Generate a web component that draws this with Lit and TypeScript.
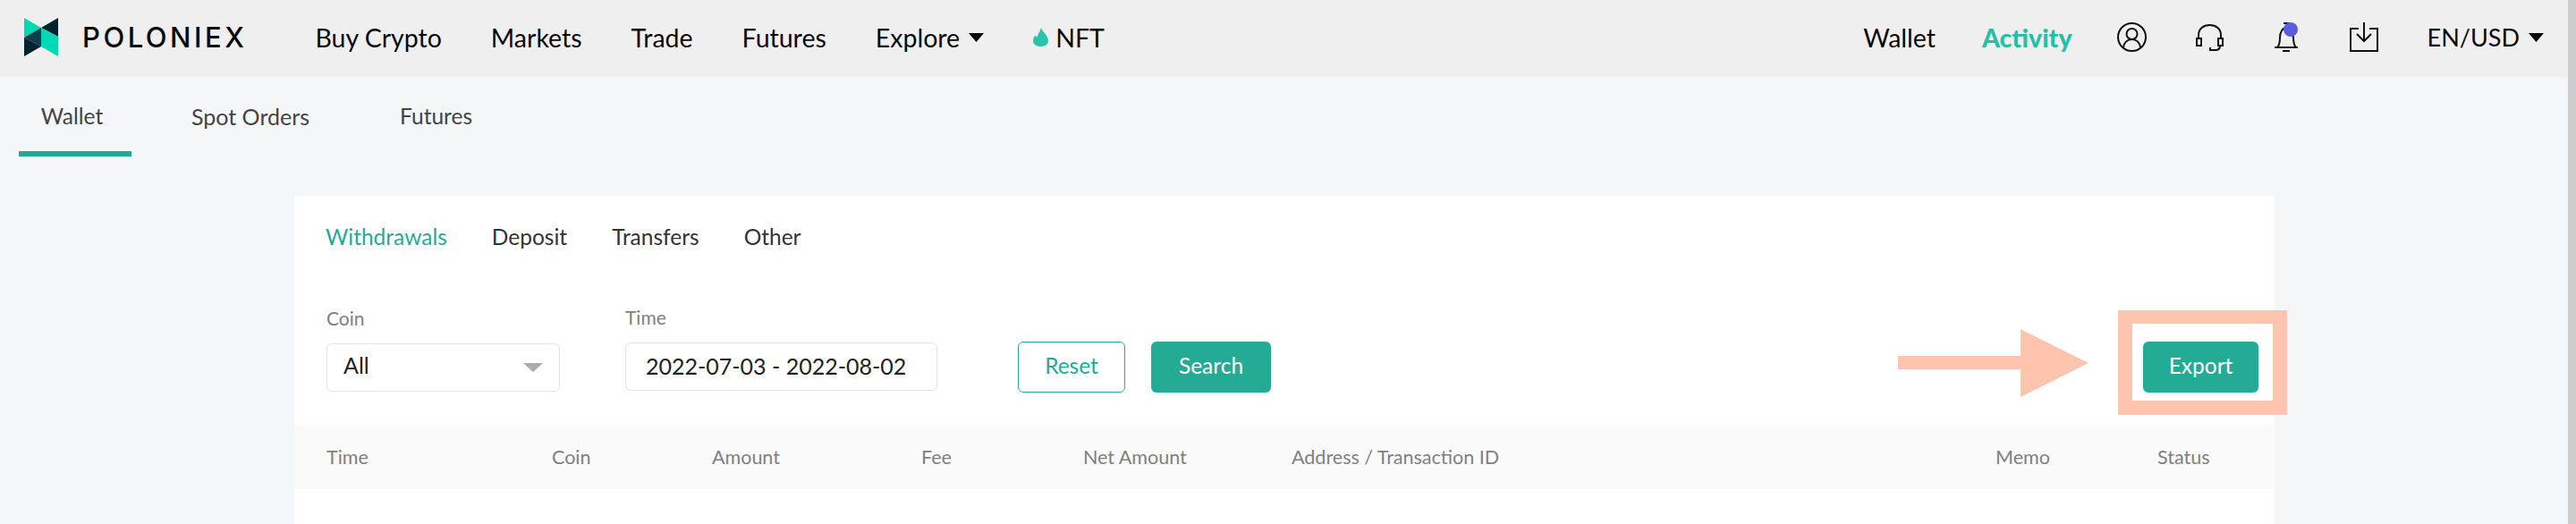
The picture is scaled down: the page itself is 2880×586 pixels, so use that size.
import { LitElement, html, css } from "lit";
import { customElement } from "lit/decorators.js";

@customElement("app-root")
export class AppRoot extends LitElement {
  static styles = css`
    :host { display: block; position: relative; width: 2880px; height: 586px; overflow: hidden; font-family: "Lato", "Liberation Sans", sans-serif; background: #f5f6f8; color: #111; }
    .page { display: flex; height: 586px; }
    .main { flex: 1; min-width: 0; display: flex; flex-direction: column; }
    .scrollbar { width: 9px; background: #cdcdcd; }
    .top { height: 86px; box-sizing: border-box; background: #efefef; display: flex; align-items: center; padding: 0 27px 3px; font-size: 28.500px; color: #0a0a0a; flex: none; }
    .logo { display: block; flex: none; }
    .brand { font-family: "Inter", "Liberation Sans", sans-serif; font-weight: 500; font-size: 31px; letter-spacing: 3.5px; margin-left: 27px; margin-right: 76px; color: #0a0a0a; line-height: 1; }
    .nav { display: flex; align-items: center; gap: 55px; }
    .nav span { display: flex; align-items: center; }
    .right { margin-left: auto; display: flex; align-items: center; gap: 55px; }
    .wallet { margin-right: -3px; }
    .activity { color: #26bfa5; font-weight: 900; font-size: 28.500px; margin-right: -5px; }
    .caret { display: block; margin-left: 10px; }
    .flame { display: block; margin-right: 8px; }
    .icon { display: block; flex: none; }
    .locale { display: flex; align-items: center; font-size: 27px; }
    .tabs { display: flex; height: 89px; padding-left: 21px; flex: none; font-size: 24.500px; color: #444; }
    .tab { width: 126px; box-sizing: border-box; display: flex; justify-content: center; padding-top: 26px; height: 89px; border-bottom: 6px solid transparent; line-height: 36px; }
    .tab.on { border-bottom-color: #24ab96; padding-right: 7px; }
    .tab.spot { width: auto; margin-left: 67px; font-size: 25px; }
    .tab.fut { width: auto; margin-left: 101px; }
    .card { margin: 44px 0 0 329px; width: 2214px; flex: 1; background: #fff; box-sizing: border-box; padding-top: 30px; }
    .sub { display: flex; gap: 50px; padding-left: 35px; font-size: 24.500px; line-height: 32px; color: #333; }
    .sub .on { color: #24ab96; }
    .filters { display: flex; align-items: flex-end; margin-top: 63px; padding: 0 18px 0 36px; height: 95px; }
    .field { display: flex; flex-direction: column; }
    .field label { font-size: 21px; line-height: 30px; color: #808080; margin-bottom: 13px; }
    .box { height: 54px; box-sizing: border-box; border: 1px solid #e4e4e4; border-radius: 6px; display: flex; align-items: center; font-size: 25px; color: #222; margin-bottom: 1px; }
    .coin { width: 261px; padding: 0 18px; justify-content: space-between; }
    .coin-value { padding-bottom: 6px; }
    .date { width: 349px; padding: 0 22px 2px; margin-bottom: 2px; }
    .time { margin-left: 73px; }
    .btn { height: 57px; box-sizing: border-box; border-radius: 6px; display: flex; align-items: center; justify-content: center; font-size: 24.500px; flex: none; padding-bottom: 4px; }
    .reset { width: 120px; margin-left: 90px; border: 1px solid #24ab96; color: #24ab96; }
    .solid { background: #24ab96; color: #fff; box-shadow: 0 2px 4px rgba(0, 0, 0, 0.08); }
    .search { width: 134px; margin-left: 29px; }
    .export { width: 129px; margin-left: auto; }
    .thead { display: grid; grid-template-columns: 252px 179px 234px 181px 233px 787px 181px 1fr; margin-top: 36px; height: 72px; padding-left: 36px; align-items: center; background: #fafafa; color: #808080; font-size: 21.500px; }
    .mark { position: absolute; left: 2368px; top: 347px; width: 189px; height: 117px; box-sizing: border-box; border: solid #ffc4ad; border-width: 15px 16px 16px; }
    .arrow { position: absolute; left: 2122px; top: 368px; display: block; }
  `;

  caret() {
    return html`<svg class="caret" width="17" height="10" viewBox="0 0 17 10"><path d="M0 0h17L8.500 10z" fill="#0a0a0a"/></svg>`;
  }

  render() {
    return html`
      <div class="page">
        <div class="main">
          <header class="top">
            <svg class="logo" width="38" height="43" viewBox="27 20 38 43">
              <path d="M27 20l19 11-19 11z" fill="#00d8b4"/>
              <path d="M65 20L46 31l19 10z" fill="#03242f"/>
              <path d="M46 31L27 42l19 10z" fill="#0f3d50"/>
              <path d="M46 31l19 10v22l-19-11z" fill="#00d8b4"/>
              <path d="M27 42l19 10-19 11z" fill="#03242f"/>
            </svg>
            <div class="brand">POLONIEX</div>
            <nav class="nav">
              <span>Buy Crypto</span><span>Markets</span><span>Trade</span><span>Futures</span>
              <span>Explore${this.caret()}</span>
              <span>
                <svg class="flame" width="17" height="21" viewBox="0 0 17 21"><path d="M9 0c.5 3 3 4.500 5 7.500 2 3 3 5 3 7.500 0 3.500-3.500 6-8.500 6S0 18.500 0 14.500c0-2.500 1-4 2.500-6 .5 1 1.500 1.500 2.500 2C5 7 8 4 9 0z" fill="#2bc4aa"/></svg>NFT
              </span>
            </nav>
            <div class="right">
              <span class="wallet">Wallet</span>
              <span class="activity">Activity</span>
              <svg class="icon" width="33" height="33" viewBox="0 0 33 33" fill="none" stroke="#111" stroke-width="2">
                <circle cx="16.500" cy="16.500" r="15.500"/><circle cx="16.500" cy="13" r="6"/>
                <path d="M7 28c.5-5 4-9 9.500-9s9 4 9.500 9"/>
              </svg>
              <svg class="icon" width="31" height="30" viewBox="0 0 31 30" fill="none" stroke="#111" stroke-width="2">
                <path d="M3 16V12C3 5.500 8.500 1 15.500 1S28 5.500 28 12v4"/>
                <rect x="1" y="16" width="5" height="8"/><rect x="25" y="16" width="5" height="8"/>
                <path d="M27 24c0 3-2 5-5 5h-6v-3"/>
              </svg>
              <svg class="icon" width="31" height="33" viewBox="0 0 31 33" fill="none" stroke="#111" stroke-width="2">
                <path d="M2 28h26M5 28c3-3 3-7 3-11 0-6 3-11 7-11s8 5 8 11c0 4 0 8 3 11"/>
                <path d="M11 32h8M12 1h7"/>
                <circle cx="20" cy="8" r="8" fill="#5b5bdf" stroke="none"/>
              </svg>
              <svg class="icon" width="32" height="33" viewBox="0 0 32 33" fill="none" stroke="#111" stroke-width="2">
                <path d="M10 7H1v25h30V7h-9M16 0v21M8 13l8 8 8-8"/>
              </svg>
              <span class="locale">EN/USD${this.caret()}</span>
            </div>
          </header>
          <div class="tabs">
            <div class="tab on">Wallet</div>
            <div class="tab spot">Spot Orders</div>
            <div class="tab fut">Futures</div>
          </div>
          <section class="card">
            <div class="sub"><span class="on">Withdrawals</span><span>Deposit</span><span>Transfers</span><span>Other</span></div>
            <div class="filters">
              <div class="field">
                <label>Coin</label>
                <div class="box coin"><span class="coin-value">All</span><svg width="22" height="10" viewBox="0 0 22 10"><path d="M0 0h22L11 10z" fill="#aaa"/></svg></div>
              </div>
              <div class="field time">
                <label>Time</label>
                <div class="box date">2022-07-03 - 2022-08-02</div>
              </div>
              <div class="btn reset">Reset</div>
              <div class="btn solid search">Search</div>
              <div class="btn solid export">Export</div>
            </div>
            <div class="thead">
              <span>Time</span><span>Coin</span><span>Amount</span><span>Fee</span><span>Net Amount</span><span>Address / Transaction ID</span><span>Memo</span><span>Status</span>
            </div>
          </section>
        </div>
        <div class="scrollbar"></div>
      </div>
      <div class="mark"></div>
      <svg class="arrow" width="213" height="76" viewBox="0 0 213 76"><path d="M0 30h137V0l76 38-76 38V45H0z" fill="#ffc4ad"/></svg>
    `;
  }
}
